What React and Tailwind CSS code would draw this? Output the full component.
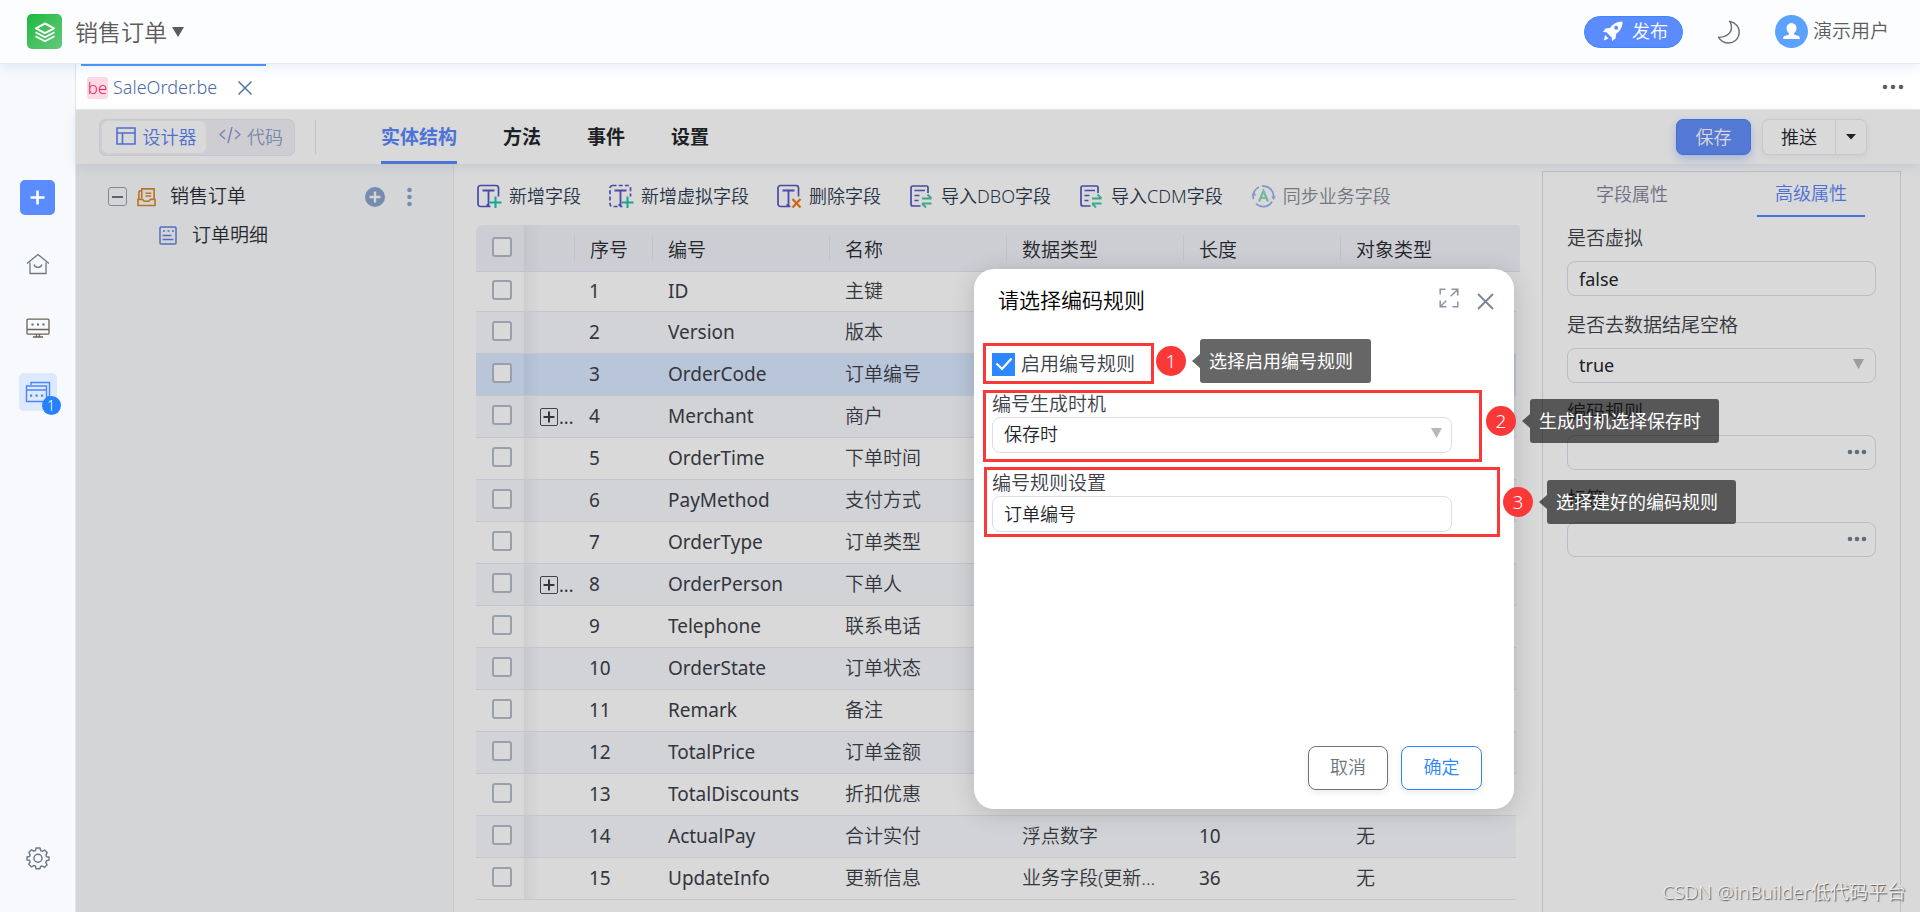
const ROWS = [
  ['ID', '主键', '', '', ''],
  ['Version', '版本', '', '', ''],
  ['OrderCode', '订单编号', '', '', ''],
  ['Merchant', '商户', '', '', ''],
  ['OrderTime', '下单时间', '', '', ''],
  ['PayMethod', '支付方式', '', '', ''],
  ['OrderType', '订单类型', '', '', ''],
  ['OrderPerson', '下单人', '', '', ''],
  ['Telephone', '联系电话', '', '', ''],
  ['OrderState', '订单状态', '', '', ''],
  ['Remark', '备注', '', '', ''],
  ['TotalPrice', '订单金额', '', '', ''],
  ['TotalDiscounts', '折扣优惠', '', '', ''],
  ['ActualPay', '合计实付', '浮点数字', '10', '无'],
  ['UpdateInfo', '更新信息', '业务字段(更新...', '36', '无'],
];

const HEADS = ['序号', '编号', '名称', '数据类型', '长度', '对象类型'];

function Svg({ w, h, vb, children, ...rest }) {
  return (
    <svg width={w} height={h || w} viewBox={vb || `0 0 ${w} ${h || w}`} fill="none" aria-hidden="true" className="shrink-0" {...rest}>
      {children}
    </svg>
  );
}

function Dots({ color, size = 22, r = 2.3, step = 8 }) {
  return (
    <Svg w={size} h={6}>
      {[-1, 0, 1].map((i) => (
        <circle key={i} cx={size / 2 + i * step} cy="3" r={r} fill={color} />
      ))}
    </Svg>
  );
}

function FieldIcon({ kind }) {
  return (
    <Svg w={25}>
      <rect x="1" y="1.5" width="20.5" height="21" rx="2.5" stroke="#5558c4" strokeWidth="1.7" strokeDasharray={kind === 'virtual' ? '4 2.2' : undefined} />
      <rect x="13.5" y="12.5" width="11.5" height="12.5" className="fill-white" />
      <path d="M5.500 6.500h12M11.500 6.500v14.500h-2" stroke="#5558c4" strokeWidth="1.800" />
      {kind === 'delete' ? (
        <path d="M15.500 15l8 8.500M23.500 15l-8 8.500" stroke="#f07818" strokeWidth="2.200" />
      ) : (
        <path d="M18.500 12.500v11.500M12.500 18.500h12" stroke="#1cc2ae" strokeWidth="2" />
      )}
    </Svg>
  );
}

function ImportIcon() {
  return (
    <Svg w={25}>
      <path d="M11.500 22H4a2 2 0 0 1-2-2V4a2 2 0 0 1 2-2h13.500a1.500 1.500 0 0 1 1.500 1.500V9" stroke="#5558c4" strokeWidth="1.700" />
      <path d="M5.500 6.500h10.500M5.500 11.500h5M5.500 16.500h4" stroke="#5558c4" strokeWidth="1.600" />
      <path d="M13 14.500h9.500M18.500 10.500l4 4M22.500 19.500h-9.500M17 23.500l-4-4" stroke="#45c8a4" strokeWidth="1.800" />
    </Svg>
  );
}

function SyncIcon() {
  return (
    <Svg w={25}>
      <path d="M2.500 15A10 10 0 0 1 8 3M11 2.200A10 10 0 0 1 22.300 14M21 17.500A10 10 0 0 1 5 19.500" stroke="#9cb2f2" strokeWidth="1.800" />
      <path d="M0.500 11.500h5l-2.500-3.500zM20 12.500h5l-2.500 3.500z" fill="#9cb2f2" />
      <path d="M8 17.500L12.500 7l4.500 10.500M9.700 14h5.600" stroke="#86d8c4" strokeWidth="2.200" />
    </Svg>
  );
}

function ToolButton({ icon, children, muted }) {
  return (
    <button type="button" disabled={muted} className={`flex items-center gap-[7px] whitespace-nowrap text-[18px] font-[350] ${muted ? 'text-[#858d98]' : 'text-[#2d3c52]'}`}>
      {icon}
      {children}
    </button>
  );
}

function Box({ label }) {
  return (
    <input
      type="checkbox"
      aria-label={label}
      className="block size-5 appearance-none rounded-[3px] border-2 border-[#b4bccb] bg-white"
    />
  );
}

function Header() {
  return (
    <header className="relative z-20 flex h-16 shrink-0 items-center border-b border-[#e6eaf0] bg-[#fcfdff] pl-[27px] pr-[31px] shadow-[0_4px_12px_rgba(90,140,210,0.14)]">
      <span className="flex size-[35px] items-center justify-center rounded-[5px] bg-linear-to-br from-[#0bba3c] to-[#62c87a]">
        <Svg w={22}>
          <path d="M11 2.500L20 7.300 11 12.100 2 7.300z" stroke="#fff" strokeWidth="2" strokeLinejoin="round" />
          <path d="M1.500 11.300l9.500 5 9.500-5M1.500 15.300l9.500 5 9.500-5" stroke="#fff" strokeWidth="1.800" />
        </Svg>
      </span>
      <button type="button" className="ml-[13px] flex items-center gap-[5px] text-[23px] font-[350] leading-8 text-[#5c5c5c]">
        销售订单
        <Svg w={12} h={10}><path d="M0 0h12l-6 10z" fill="#5c5c5c" /></Svg>
      </button>
      <div className="ml-auto flex items-center">
        <button type="button" className="flex h-8 w-[99px] items-center justify-center gap-[9px] rounded-full border border-[#3d86ff] bg-[#5b8cff] pb-px pl-1 text-[18px] font-[350] text-white">
          <Svg w={20}>
            <path d="M19.500 0.500C13 0.500 9.500 3.500 7 7L2.500 7.500 0 11l3.500 0.300L8.700 16.500 9 20l3.500-2.500 0.500-4.500C16.500 10.500 19.500 7 19.500 0.500z" fill="#fff" />
            <path d="M2 14l3.500 3.500-4.500 2z" fill="#fff" />
            <circle cx="13.200" cy="6.800" r="2" fill="#5b8cff" />
          </Svg>
          发布
        </button>
        <button type="button" aria-label="切换主题" className="ml-[34px]">
          <Svg w={24}>
            <path d="M12.500 1.200C19 2.500 22.700 7.500 22.200 13 21.700 19 17 23 11.500 23 7.500 23 3.800 20.800 1.500 17.300 9 17.800 14.500 13 14.500 7.500 14.500 5 13.800 3 12.500 1.200z" stroke="#6b6e78" strokeWidth="1.400" strokeLinejoin="round" />
          </Svg>
        </button>
        <button type="button" className="ml-[34px] flex items-center gap-[5px] text-[19px] font-[350] text-[#5c5c5c]">
          <Svg w={33}>
            <circle cx="16.500" cy="16.500" r="16.500" fill="#5aa2fd" />
            <path d="M16.500 8a5 5 0 0 1 5 5.200c0 2-1 3.800-2.500 5v1.200l4.500 1.600c.8.400 1.300 1.200 1.300 2V24H8.200v-1c0-.800.500-1.600 1.300-2l4.500-1.600v-1.200c-1.500-1.200-2.500-3-2.500-5a5 5 0 0 1 5-5.200z" fill="#fff" />
          </Svg>
          演示用户
        </button>
      </div>
    </header>
  );
}

function Sidebar() {
  return (
    <nav className="flex w-[76px] shrink-0 flex-col items-center border-r border-[#dfe3ea] bg-[#f7f9fc] pt-[116px]">
      <button type="button" aria-label="新建" className="flex size-[35px] items-center justify-center rounded-[5px] bg-[#5b8cff]">
        <Svg w={15}><path d="M7.500 0.500v14M0.500 7.500h14" stroke="#fff" strokeWidth="2.600" /></Svg>
      </button>
      <button type="button" aria-label="首页" className="mt-[38px]">
        <Svg w={24} h={22}>
          <path d="M1 10.500L12 1.500l11 9M4 9.500v11h16v-11" stroke="#6f7780" strokeWidth="1.300" />
          <path d="M8 11.500a4.200 4.200 0 0 0 8 0" stroke="#6f7780" strokeWidth="1.300" />
        </Svg>
      </button>
      <button type="button" aria-label="控制台" className="mt-[43px]">
        <Svg w={24} h={20}>
          <path d="M2 1.200h20a1 1 0 0 1 1 1v13a1 1 0 0 1-1 1H2a1 1 0 0 1-1-1v-13a1 1 0 0 1 1-1zM1 11.500h22M10.500 16.500v2.500M13.500 16.500v2.500M7 19h10" stroke="#6b6259" strokeWidth="1.300" />
          <path d="M5.500 5.500h2v2h-2zM11 5.500h2v2h-2zM16.500 5.500h2v2h-2z" fill="#6b6259" />
        </Svg>
      </button>
      <button type="button" aria-label="已打开页面" className="relative mt-[35px] flex h-[38px] w-[38px] items-center justify-center rounded-[5px] bg-[#dce9ff]">
        <Svg w={26} h={22}>
          <path d="M6 4V1.500h18.500V16H22" stroke="#4a86f7" strokeWidth="1.400" />
          <path d="M1.500 5h20v15.500h-20zM1.500 9h20" stroke="#4a86f7" strokeWidth="1.400" />
          <path d="M5 13.500h2.200v2.200H5zM10.500 13.500h2.200v2.200h-2.200zM16 13.500h2.200v2.200H16z" fill="#4a86f7" />
        </Svg>
        <span className="absolute -bottom-1 -right-1 flex size-[19px] items-center justify-center rounded-full bg-[#2680ff] text-[14px] font-light text-white">1</span>
      </button>
      <button type="button" aria-label="设置" className="mb-[42px] mt-auto">
        <Svg w={24} vb="0 0 24 24">
          <path d="M10 2h4l.6 2.700 1.700.7 2.300-1.400 2.700 2.700-1.400 2.300.7 1.700L23 11v3l-2.600.7-.7 1.700 1.400 2.300-2.700 2.700-2.300-1.400-1.700.7L14 22.700h-4l-.5-2.500-1.700-.7-2.300 1.400-2.700-2.700 1.400-2.300-.7-1.700L1 14v-3l2.500-.5.7-1.700-1.400-2.300 2.700-2.700 2.300 1.400 1.700-.7z" stroke="#6c7684" strokeWidth="1.400" strokeLinejoin="round" />
          <circle cx="12" cy="12.300" r="4" stroke="#6c7684" strokeWidth="1.400" />
        </Svg>
      </button>
    </nav>
  );
}

function EditorBar() {
  return (
    <div className="relative z-[1] flex h-[54px] shrink-0 items-center bg-white pl-[23px] pr-[53px] shadow-[0_3px_10px_rgba(120,140,190,0.16)]">
      <div className="flex h-[37px] items-center rounded-[7px] bg-[#f1f1f7] p-[3px] ring-1 ring-inset ring-[#e4eaf7]">
        <button type="button" className="flex h-8 w-[104px] items-center justify-center gap-[7px] rounded-[6px] bg-white pl-1 text-[18px] font-[350] text-[#5b84f5]">
          <Svg w={20} h={20}><path d="M1 1h18v16H1zM1 6h18M6.500 6v11" stroke="#5b84f5" strokeWidth="1.600" /></Svg>
          设计器
        </button>
        <button type="button" className="flex h-8 w-[86px] items-center justify-center gap-[6px] pl-1 text-[18px] font-[350] text-[#8f9fca]">
          <Svg w={22} h={20}><path d="M6 3L1 7.500 6 12M16 3l5 4.500L16 12M13 0L9 16" stroke="#8f9fca" strokeWidth="1.500" /></Svg>
          代码
        </button>
      </div>
      <span className="ml-5 h-[34px] w-px bg-[#e2e4ea]" />
      <div className="ml-[65px] flex h-full gap-[46px] text-[19px] font-bold text-[#23262c]">
        <button type="button" className="flex h-full items-center border-b-[3px] border-[#5a88fd] pt-1 text-[#5a88fd]">实体结构</button>
        <button type="button" className="pt-px">方法</button>
        <button type="button" className="pt-px">事件</button>
        <button type="button" className="pt-px">设置</button>
      </div>
      <button type="button" className="ml-auto h-9 w-[75px] rounded-[7px] border border-[#4a86f5] bg-[#628ffa] text-[18px] font-[350] text-white shadow-[0_4px_10px_rgba(80,130,240,0.35)]">保存</button>
      <div className="ml-[11px] flex h-9 rounded-[7px] border border-[#e9ebf1] bg-white shadow-[0_2px_6px_rgba(120,130,150,0.12)]">
        <button type="button" className="w-[73px] border-r border-[#e9ebf1] text-[18px] font-[350] text-[#22252b]">推送</button>
        <button type="button" aria-label="更多推送" className="flex w-[30px] items-center justify-center">
          <Svg w={10} h={6}><path d="M0 0h10L5 5.500z" fill="#22252b" /></Svg>
        </button>
      </div>
    </div>
  );
}

function Tree() {
  return (
    <aside className="w-[378px] shrink-0 border-r border-[#eceef3] bg-[#f9fbfd] pt-[13px] text-[19px] font-[350] text-[#2b2e35]">
      <div className="flex h-[39px] items-center pl-8 pr-[41px]">
        <button type="button" aria-label="折叠" className="flex size-[19px] items-center justify-center rounded-[3px] border border-[#9aa0aa]">
          <span className="h-[2px] w-[11px] bg-[#6f757d]" />
        </button>
        <span className="ml-[10px]">
          <Svg w={19} h={20} vb="0 0 20 20">
            <path d="M5 11V1.500h13V12M5 3.500H3.500A1.500 1.500 0 0 0 2 5v7M9 6h6M9 9h6" stroke="#d98a2c" strokeWidth="1.700" />
            <path d="M1 12.500h5l1.500 2h5l1.500-2h5V19H1z" stroke="#d98a2c" strokeWidth="1.700" strokeLinejoin="round" />
          </Svg>
        </span>
        <span className="ml-[14px]">销售订单</span>
        <button type="button" aria-label="新增子对象" className="ml-auto">
          <Svg w={20}><circle cx="10" cy="10" r="10" fill="#8ba4cf" /><path d="M10 4.500v11M4.500 10h11" stroke="#f9fbfd" strokeWidth="2.400" /></Svg>
        </button>
        <button type="button" aria-label="更多" className="ml-[22px]">
          <Svg w={5} h={20}><g fill="#8ba4cf"><circle cx="2.500" cy="3" r="2.300" /><circle cx="2.500" cy="10" r="2.300" /><circle cx="2.500" cy="17" r="2.300" /></g></Svg>
        </button>
      </div>
      <div className="flex h-[39px] items-center gap-[15px] pl-[83px]">
        <Svg w={18} h={19}>
          <rect x="1" y="1" width="16" height="17" rx="1" stroke="#6284e2" strokeWidth="1.500" />
          <path d="M4 5h2M8.500 5h2M13 5h2M3.500 9.500h9M3.500 13.500h11" stroke="#6284e2" strokeWidth="1.500" />
        </Svg>
        <span>订单明细</span>
      </div>
    </aside>
  );
}

function FieldTable() {
  return (
    <table className="w-full table-fixed border-separate border-spacing-0 text-left text-[19px] text-[#3c4048]">
      <colgroup>
        <col className="w-12" />
        <col className="w-[50px]" />
        <col className="w-[78px]" />
        <col className="w-[177px]" />
        <col className="w-[177px]" />
        <col className="w-[177px]" />
        <col className="w-[157px]" />
        <col />
        <col className="w-1" />
      </colgroup>
      <thead>
        <tr className="h-[47px] text-[#2a2d33] [&>th]:border-b [&>th]:border-[#e2e5ee] [&>th]:bg-[#f1f2f8] [&>th]:p-0">
          <th className="rounded-tl-[8px]"><div className="flex justify-center pb-[3px] pl-[3px]"><Box label="全选" /></div></th>
          <th className="bg-linear-to-r from-[#e7e9ef] to-[#f1f2f8] to-30%"></th>
          {HEADS.map((h) => (
            <th key={h} className="font-[350]"><div className="h-[26px] border-l border-[#e3e5ed] pl-[15px] pt-[2px] leading-[26px]">{h}</div></th>
          ))}
          <th className="rounded-tr-[8px]"></th>
        </tr>
      </thead>
      <tbody>
        {ROWS.map(([code, name, type, len, obj], i) => (
          <tr key={code} className={`[&>td]:border-b [&>td]:border-[#e5e8f3] [&>td]:p-0 [&>td:last-child]:border-0 ${i === 0 ? 'h-10' : 'h-[42px]'} ${i === 2 ? '[&>td:not(:last-child)]:bg-[#dae8ff]' : i % 2 ? '[&>td:not(:last-child)]:bg-[#f6f8fd]' : ''}`}>
            <td><div className="flex justify-center pb-[3px] pl-[3px]"><Box label={`选择 ${code}`} /></div></td>
            <td className="bg-linear-to-r from-black/5 to-transparent to-30%">
              {(i === 3 || i === 7) && (
                <button type="button" aria-label="展开" className="flex items-center gap-px pl-4">
                  <Svg w={18}><rect x="0.500" y="0.500" width="17" height="17" rx="1.500" stroke="#4a4e57" /><path d="M9 3.500v11M3.500 9h11" stroke="#3c4048" strokeWidth="2" /></Svg>
                  <span className="text-[18px] leading-6">...</span>
                </button>
              )}
            </td>
            <td><div className="pl-[15px]">{i + 1}</div></td>
            <td><div className="pl-4">{code}</div></td>
            <td><div className="pl-4 font-[350]">{name}</div></td>
            <td><div className="pl-4 font-[350]">{type}</div></td>
            <td><div className="pl-4">{len}</div></td>
            <td><div className="pl-4 font-[350]">{obj}</div></td>
            <td></td>
          </tr>
        ))}
      </tbody>
    </table>
  );
}

function Prop({ id, label, value, kind }) {
  const box = 'h-[35px] w-full appearance-none rounded-[8px] border border-[#dadeea] bg-white px-[11px] text-[18px] text-[#22252b]';
  return (
    <div className="h-[87px]">
      <label htmlFor={id} className="block h-[39px] whitespace-nowrap text-[19px] font-[350] leading-[32px] text-[#3c4048]">{label}</label>
      <div className="relative">
        {kind === 'select' ? (
          <select id={id} className={box} defaultValue={value}><option>{value}</option></select>
        ) : (
          <input id={id} type="text" className={box} defaultValue={value} />
        )}
        {kind === 'select' && <span className="pointer-events-none absolute right-3 top-[11px]"><Svg w={11} h={10}><path d="M0 0h11L5.500 10z" fill="#b9b9b9" /></Svg></span>}
        {kind === 'more' && <button type="button" aria-label={`选择${label}`} className="absolute right-[8px] top-[14px] flex"><Dots color="#708294" size={22} step={7} /></button>}
      </div>
    </div>
  );
}

function Props() {
  return (
    <aside className="mt-[7px] w-[359px] shrink-0 border-x border-t border-[#dadeea] bg-white">
      <div className="flex h-[50px] pl-[35px] pr-[35px] text-[18px] font-[350]">
        <button type="button" className="h-[45px] w-[108px] text-[#82829a]">字段属性</button>
        <button type="button" className="ml-auto h-[45px] w-[108px] border-b-2 border-[#5a84fa] text-[#5a84fa]">高级属性</button>
      </div>
      <div className="px-6">
        <Prop id="virtual" label="是否虚拟" value="false" />
        <Prop id="trim" label="是否去数据结尾空格" value="true" kind="select" />
        <Prop id="rule" label="编码规则" value="" kind="more" />
        <Prop id="tag" label="标签" value="" kind="more" />
      </div>
    </aside>
  );
}

function Dialog() {
  const input = 'h-9 w-full appearance-none rounded-[8px] border border-[#dadeea] bg-white px-[11px] pb-[2px] text-[18px] font-[350] text-[#22252b]';
  return (
    <section role="dialog" aria-label="请选择编码规则" className="absolute left-[974px] top-[269px] z-40 flex h-[540px] w-[540px] flex-col rounded-[20px] bg-white shadow-[0_4px_24px_rgba(0,0,0,0.16)]">
      <div className="flex h-16 items-center pl-6 pr-5">
        <h2 className="text-[21px] font-[350] text-black">请选择编码规则</h2>
        <button type="button" aria-label="最大化" className="ml-auto pb-[6px]">
          <Svg w={20}><path d="M6.500 1.200H1.200v5.300M18.800 13.500v5.300h-5.300M12.500 1.200h6.300v6.300M18.800 1.200l-7 7M7.500 18.800H1.200v-6.300M1.200 18.800l6-6" stroke="#8b93a3" strokeWidth="1.500" /></Svg>
        </button>
        <button type="button" aria-label="关闭" className="ml-[18px]">
          <Svg w={17}><path d="M1 1l15 15M16 1L1 16" stroke="#7b8596" strokeWidth="1.900" /></Svg>
        </button>
      </div>
      <div className="pl-[18px] pr-[62px] text-[19px] font-[350] text-[#3c4048]">
        <div className="mt-[18px] flex h-[26px] items-center gap-[6px]">
          <span className="relative flex size-[23px]">
            <input id="enable" type="checkbox" defaultChecked className="size-[23px] appearance-none bg-[#2d88ff]" />
            <span className="pointer-events-none absolute inset-0 flex items-center justify-center"><Svg w={18} h={14}><path d="M1.500 6.500L7 12 16.500 1.500" stroke="#fff" strokeWidth="2.200" /></Svg></span>
          </span>
          <label htmlFor="enable">启用编号规则</label>
        </div>
        <label htmlFor="timing" className="mt-[14px] block h-[26px] leading-[26px]">编号生成时机</label>
        <div className="relative">
          <select id="timing" className={input}><option>保存时</option></select>
          <span className="pointer-events-none absolute right-[10px] top-[11px]"><Svg w={11} h={10}><path d="M0 0h11L5.500 10z" fill="#b9b9b9" /></Svg></span>
        </div>
        <label htmlFor="ruleset" className="mt-[17px] block h-[26px] leading-[26px]">编号规则设置</label>
        <input id="ruleset" type="text" defaultValue="订单编号" className={input} />
      </div>
      <div className="mb-[19px] mt-auto flex justify-end gap-[13px] pr-8 text-[18px] font-[350]">
        <button type="button" className="h-11 w-20 rounded-[8px] border border-[#6c757d] pb-[2px] text-[#6c757d] shadow-[0_3px_6px_rgba(0,0,0,0.08)]">取消</button>
        <button type="button" className="h-11 w-[81px] rounded-[8px] border border-[#2d88ff] pb-[2px] text-[#2d88ff] shadow-[0_3px_6px_rgba(0,0,0,0.08)]">确定</button>
      </div>
    </section>
  );
}

function Note({ n, frame, badge, tip, text }) {
  return (
    <>
      <span className={`absolute z-50 border-[3px] border-[#fa3838] ${frame}`} />
      <span className={`absolute z-50 flex size-[30px] items-center justify-center rounded-full bg-[#fa3838] text-[19px] font-[350] text-white ${badge}`}>{n}</span>
      <div className={`absolute z-50 flex items-center ${tip}`}>
        <Svg w={8} h={14}><path d="M8 0v14L0 7z" fill="#000" fillOpacity="0.6" /></Svg>
        <span className="flex h-11 grow items-center rounded-[3px] bg-black/60 pl-[9px] text-[18px] text-white">{text}</span>
      </div>
    </>
  );
}

export default function App() {
  return (
    <div className="relative flex h-screen flex-col overflow-hidden bg-white font-['Noto_Sans','Noto_Sans_CJK_SC',sans-serif]">
      <Header />
      <div className="flex min-h-0 grow">
        <Sidebar />
        <main className="flex min-w-0 grow flex-col">
          <div className="flex h-[46px] shrink-0 items-center border-b border-[#e8eaef] bg-white pl-[5px] pr-[15px]">
            <div className="flex h-full w-[185px] items-center border-t-2 border-[#4a93fb] pl-[6px] text-[18px]">
              <span className="flex h-[22px] w-[21px] items-center justify-center rounded-[3px] bg-[#ffd9e4] text-[17px] font-[350] text-[#ee1f5c]">be</span>
              <a href="#sale-order" className="ml-[5px] font-light text-[#4b6aa8]">SaleOrder.be</a>
              <button type="button" aria-label="关闭标签" className="ml-auto mr-[14px]">
                <Svg w={14}><path d="M0.500 0.500l13 13M13.500 0.500l-13 13" stroke="#4b6a9c" strokeWidth="1.400" /></Svg>
              </button>
            </div>
            <button type="button" aria-label="更多标签" className="ml-auto flex"><Dots color="#5f6065" size={24} /></button>
          </div>
          <div className="relative flex min-h-0 grow flex-col bg-white">
            <EditorBar />
            <div className="flex min-h-0 grow">
              <Tree />
              <div className="min-w-0 grow overflow-hidden pl-[22px] pr-[22px]">
                <div className="flex h-[61px] items-center gap-7 pb-[2px] pl-px pt-[5px]">
                  <ToolButton icon={<FieldIcon />}>新增字段</ToolButton>
                  <ToolButton icon={<FieldIcon kind="virtual" />}>新增虚拟字段</ToolButton>
                  <ToolButton icon={<FieldIcon kind="delete" />}>删除字段</ToolButton>
                  <ToolButton icon={<ImportIcon />}>导入DBO字段</ToolButton>
                  <ToolButton icon={<ImportIcon />}>导入CDM字段</ToolButton>
                  <ToolButton muted icon={<SyncIcon />}>同步业务字段</ToolButton>
                </div>
                <FieldTable />
              </div>
              <Props />
              <div className="w-[19px] shrink-0" />
            </div>
            <div className="absolute inset-0 z-10 bg-black/15" />
          </div>
        </main>
      </div>
      <Dialog />
      <Note n={1} text="选择启用编号规则" frame="left-[983px] top-[343px] h-[41px] w-[171px]" badge="left-[1156px] top-[346px]" tip="left-[1192px] top-[339px] w-[179px]" />
      <Note n={2} text="生成时机选择保存时" frame="left-[983px] top-[390px] h-[72px] w-[499px]" badge="left-[1486px] top-[406px]" tip="left-[1522px] top-[399px] w-[197px]" />
      <Note n={3} text="选择建好的编码规则" frame="left-[984px] top-[467px] h-[70px] w-[516px]" badge="left-[1503px] top-[487px]" tip="left-[1539px] top-[480px] w-[197px]" />
      <div className="absolute bottom-[6px] right-[14px] z-50 text-[19px] font-[350] text-[#ececec] [text-shadow:1px_1px_1px_#555]">CSDN @inBuilder低代码平台</div>
    </div>
  );
}
